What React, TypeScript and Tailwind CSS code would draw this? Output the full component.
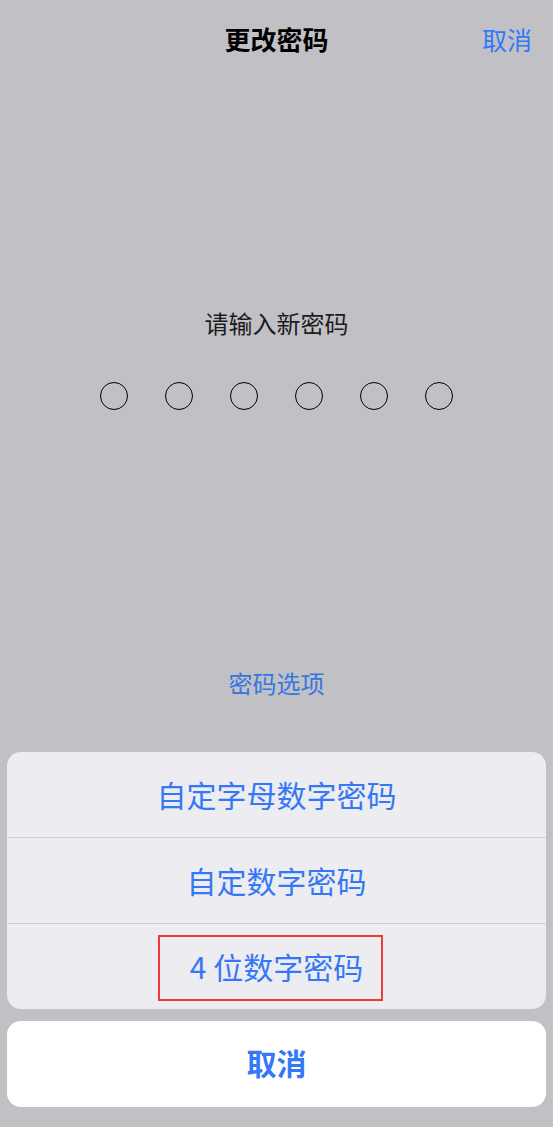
const font = { fontFamily: '"Noto Sans CJK SC", "Noto Sans", sans-serif' }

function Dot() {
  return <div className="w-[28px] h-[28px] rounded-full border-[1.75px] border-black" />
}

export default function App() {
  return (
    <div
      className="w-[553px] h-[1127px] bg-[#c1c0c5] flex flex-col text-black overflow-hidden"
      style={font}
    >
      {/* Nav bar */}
      <div className="grid grid-cols-[1fr_auto_1fr] items-center pt-[24px] px-[21px]">
        <div />
        <h1 className="text-[26px] leading-[30px] font-semibold">更改密码</h1>
        <div className="text-right text-[25px] leading-[30px] text-[#3478f6]">取消</div>
      </div>

      {/* Prompt */}
      <p className="mt-[253px] text-center text-[24px] leading-[32px] text-[#1c1c1e]">请输入新密码</p>

      <div className="mt-[43px] flex justify-center gap-[37px]">
        <Dot />
        <Dot />
        <Dot />
        <Dot />
        <Dot />
        <Dot />
      </div>

      <p className="mt-[257px] text-center text-[24px] leading-[32px] text-[#3476e0]">密码选项</p>

      {/* Action sheet */}
      <div className="mt-[53px] mx-[7px] rounded-[14px] bg-[#edecf0] overflow-hidden">
        <div className="h-[85px] flex items-center justify-center text-[30px] text-[#3478f6]">
          自定字母数字密码
        </div>
        <div className="h-px bg-[#cfced3]" />
        <div className="h-[85px] flex items-center justify-center text-[30px] text-[#3478f6]">
          自定数字密码
        </div>
        <div className="h-px bg-[#cfced3]" />
        <div className="relative h-[85px] flex items-center justify-center text-[30px] text-[#3478f6]">
          4 位数字密码
          {/* highlight annotation */}
          <div className="absolute left-[151px] top-[11px] w-[225px] h-[66px] border-2 border-[#f03a3a]" />
        </div>
      </div>

      <button className="mt-[12px] mx-[7px] h-[86px] rounded-[14px] bg-white flex items-center justify-center pb-[3px] text-[30px] font-semibold text-[#3478f6]">
        取消
      </button>
    </div>
  )
}
